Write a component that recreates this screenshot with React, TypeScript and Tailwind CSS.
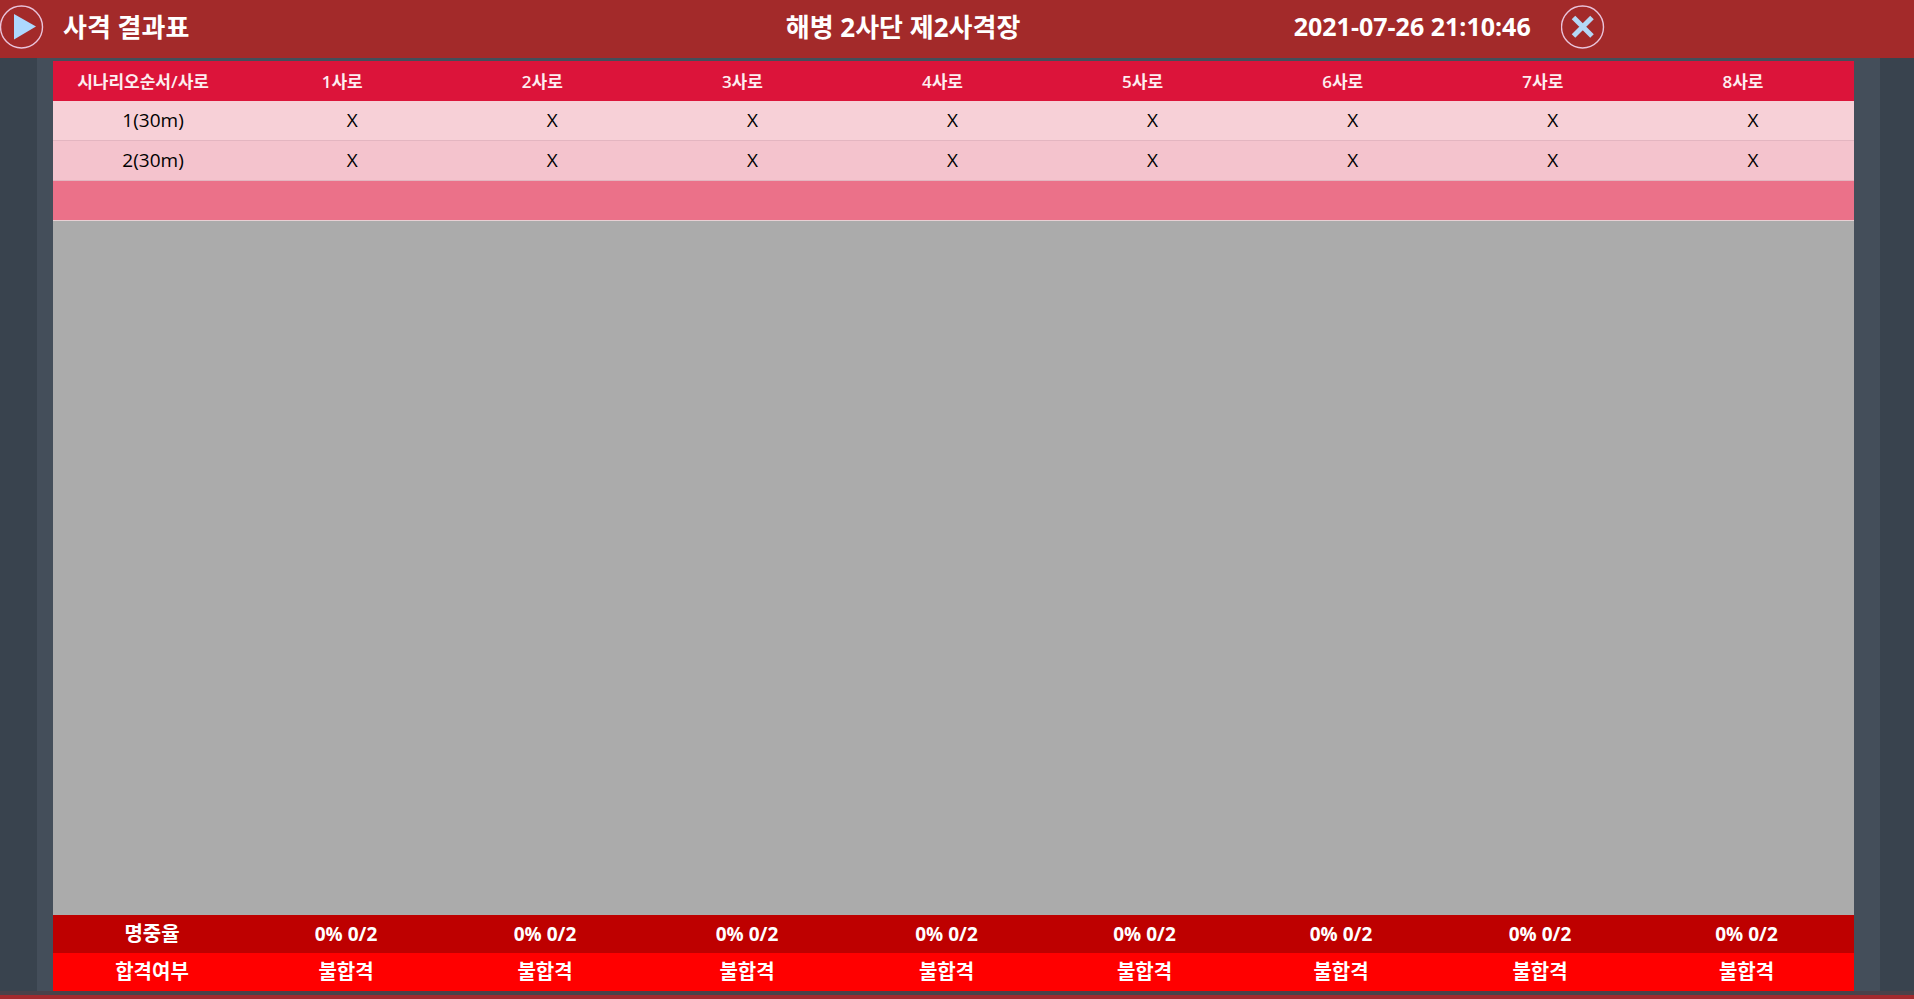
import type React from 'react'

type Round = {
  label: string
  shots: string[]
}

const lanes = ['1사로', '2사로', '3사로', '4사로', '5사로', '6사로', '7사로', '8사로']

const rounds: Round[] = [
  { label: '1(30m)', shots: ['X', 'X', 'X', 'X', 'X', 'X', 'X', 'X'] },
  { label: '2(30m)', shots: ['X', 'X', 'X', 'X', 'X', 'X', 'X', 'X'] },
]

const summary = lanes.map((lane) => ({ lane, rate: '0% 0/2', result: '불합격' }))

function RoundButton({
  label,
  children,
}: {
  label: string
  children: React.ReactNode
}) {
  return (
    <button type="button" aria-label={label} className="size-11 shrink-0">
      <svg viewBox="0 0 44 44" className="size-11" fill="none">
        <circle cx="21.5" cy="22" r="21" stroke="#e9c3da" strokeWidth="1.4" />
        {children}
      </svg>
    </button>
  )
}

function Header() {
  return (
    <header className="flex h-[58px] items-center bg-[#a32a2a] pb-1 text-[26px] font-bold text-white">
      <div className="flex w-[41%] items-center gap-[19px]">
        <RoundButton label="재생">
          <path d="M14 9 36 21.5 14 34.5Z" fill="#add8ff" />
        </RoundButton>
        <h1>사격 결과표</h1>
      </div>
      <div className="w-[509px] pl-px">해병 2사단 제2사격장</div>
      <time dateTime="2021-07-26T21:10:46" className="w-[267px] text-[25px] whitespace-nowrap">
        2021-07-26 21:10:46
      </time>
      <RoundButton label="닫기">
        <path d="M12.5 12.5 31 31M31 12.5 12.5 31" stroke="#b4d8f6" strokeWidth="5" />
      </RoundButton>
    </header>
  )
}

/** 시나리오별 사격 결과 */
function ResultTable() {
  return (
    <table className="w-full table-fixed border-separate border-spacing-0 text-center text-[19px] text-black">
      <thead>
        <tr className="h-10 bg-[#dc143a] text-[17px] text-[#fdeef0]">
          <th className="pt-0.5 pr-5 font-semibold whitespace-nowrap">시나리오순서/사로</th>
          {lanes.map((lane) => (
            <th key={lane} className="pt-0.5 pr-[22px] font-semibold">
              {lane}
            </th>
          ))}
        </tr>
      </thead>
      <tbody>
        {rounds.map((round) => (
          <tr key={round.label} className="h-10 odd:bg-[#f7d0d7] even:bg-[#f4c3cd]">
            <td className="border-b border-[#e3b5c0]">{round.label}</td>
            {round.shots.map((shot, i) => (
              <td key={lanes[i]} className="border-b border-[#e3b5c0] pr-0.5">
                {shot}
              </td>
            ))}
          </tr>
        ))}
        <tr className="h-10 bg-[#eb7189]">
          <td colSpan={9} className="border-b border-[#e8d0d4]" />
        </tr>
      </tbody>
    </table>
  )
}

/** 사로별 명중률과 합격 여부 */
function SummaryTable() {
  return (
    <table className="w-full table-fixed border-collapse text-center text-xl text-white">
      <colgroup>
        <col className="w-[198px]" />
        <col className="w-[190px]" />
        <col className="w-[208px]" />
        <col className="w-[196px]" />
        <col className="w-[203px]" />
        <col className="w-[193px]" />
        <col className="w-[200px]" />
        <col className="w-[198px]" />
        <col className="w-[215px]" />
      </colgroup>
      <tbody>
        <tr className="h-[38px] bg-[#be0000]">
          <th className="font-bold">명중율</th>
          {summary.map((item) => (
            <td key={item.lane} className="text-[19px] font-bold">
              {item.rate}
            </td>
          ))}
        </tr>
        <tr className="h-[38px] bg-[#ff0000]">
          <th className="font-bold">합격여부</th>
          {summary.map((item) => (
            <td key={item.lane} className="font-bold">
              {item.result}
            </td>
          ))}
        </tr>
      </tbody>
    </table>
  )
}

export default function App() {
  return (
    <div className="flex min-h-screen flex-col bg-[#39434e] font-['Open_Sans','Noto_Sans_CJK_KR',sans-serif]">
      <Header />
      <main className="mr-[34px] ml-[37px] flex flex-1 flex-col bg-[#444e5a] pt-[3px] pr-[26px] pl-4">
        <ResultTable />
        <div className="flex-1 bg-[#ababab]" />
        <SummaryTable />
      </main>
      <div className="h-1 bg-[#49424a]" />
      <div className="h-1 bg-[#a32a2e]" />
    </div>
  )
}
